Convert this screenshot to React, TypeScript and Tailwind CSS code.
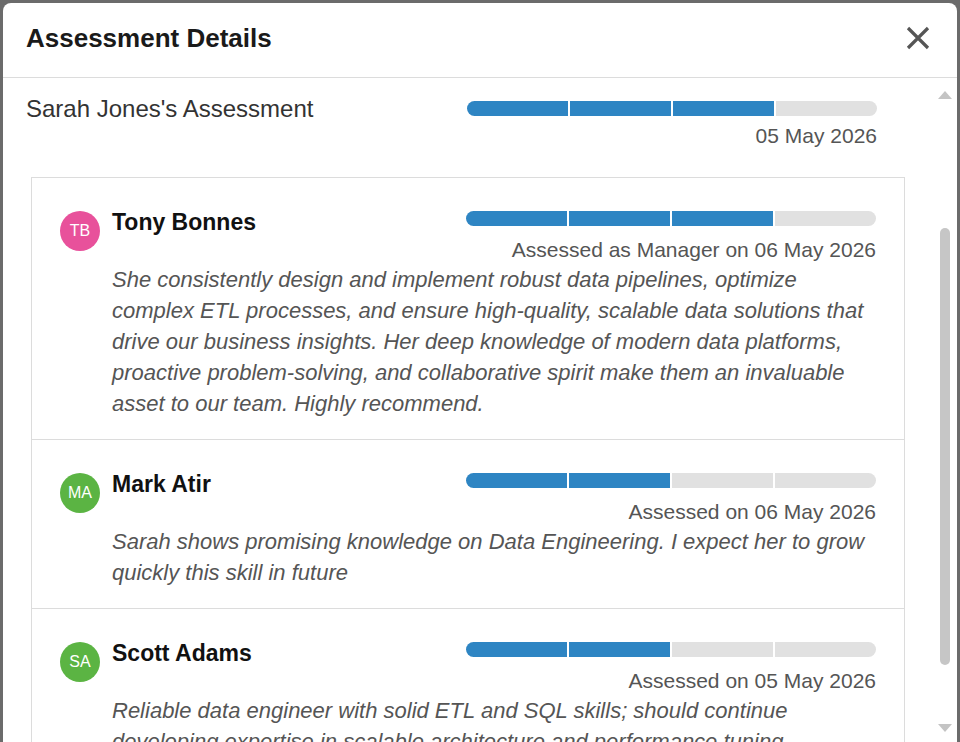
import React from "react";

type Review = {
  initials: string;
  name: string;
  avatar: string;
  filled: number;
  assessed: string;
  comment: string;
};

const reviews: Review[] = [
  {
    initials: "TB",
    name: "Tony Bonnes",
    avatar: "bg-[#e8519b]",
    filled: 3,
    assessed: "Assessed as Manager on 06 May 2026",
    comment:
      "She consistently design and implement robust data pipelines, optimize complex ETL processes, and ensure high-quality, scalable data solutions that drive our business insights. Her deep knowledge of modern data platforms, proactive problem-solving, and collaborative spirit make them an invaluable asset to our team. Highly recommend.",
  },
  {
    initials: "MA",
    name: "Mark Atir",
    avatar: "bg-[#5bb443]",
    filled: 2,
    assessed: "Assessed on 06 May 2026",
    comment:
      "Sarah shows promising knowledge on Data Engineering. I expect her to grow quickly this skill in future",
  },
  {
    initials: "SA",
    name: "Scott Adams",
    avatar: "bg-[#5bb443]",
    filled: 2,
    assessed: "Assessed on 05 May 2026",
    comment:
      "Reliable data engineer with solid ETL and SQL skills; should continue developing expertise in scalable architecture and performance tuning",
  },
];

function LevelBar({ filled, total = 4 }: { filled: number; total?: number }) {
  return (
    <div className="flex h-[15px] w-[410px] shrink-0 gap-[2px] overflow-hidden rounded-full">
      {Array.from({ length: total }).map((_, i) => (
        <div
          key={i}
          className={i < filled ? "flex-1 bg-[#2e85c3]" : "flex-1 bg-[#e1e1e1]"}
        />
      ))}
    </div>
  );
}

function ReviewRow({ review, last }: { review: Review; last: boolean }) {
  return (
    <div
      className={
        last
          ? "flex pt-[29px] pb-[20px] pl-[28px] pr-[28px]"
          : "flex border-b border-[#dcdcdc] pt-[29px] pb-[20px] pl-[28px] pr-[28px]"
      }
    >
      <div
        className={`mt-[4px] flex h-[40px] w-[40px] shrink-0 items-center justify-center rounded-full text-[16px] text-white ${review.avatar}`}
      >
        {review.initials}
      </div>
      <div className="ml-[12px] flex-1">
        <div className="flex h-[30px] items-start justify-between">
          <span className="text-[23px] font-bold leading-[30px] text-[#111]">
            {review.name}
          </span>
          <div className="mt-[4px]">
            <LevelBar filled={review.filled} />
          </div>
        </div>
        <div className="mt-[1px] text-right text-[21px] leading-[24px] text-[#555]">
          {review.assessed}
        </div>
        <p className="mt-[2px] text-[22px] italic leading-[31px] text-[#555]">
          {review.comment}
        </p>
      </div>
    </div>
  );
}

function ScrollTrack() {
  return (
    <div className="flex w-[22px] shrink-0 flex-col items-start">
      <svg width="16" height="10" viewBox="0 0 16 10" className="ml-[2px] mt-[12px]">
        <path d="M8 1 L15 9 L1 9 Z" fill="#c4c4c4" />
      </svg>
      <div className="ml-[5px] mt-[128px] h-[437px] w-[10px] rounded-full bg-[#c6c6c6]" />
      <svg width="16" height="10" viewBox="0 0 16 10" className="ml-[2px] mt-[58px]">
        <path d="M1 1 L15 1 L8 9 Z" fill="#c4c4c4" />
      </svg>
    </div>
  );
}

export default function App() {
  return (
    <div
      className="h-[742px] w-full overflow-hidden bg-[#6b6b6b] px-[3px] pt-[3px]"
      style={{ fontFamily: '"Liberation Sans", Arial, sans-serif' }}
    >
      <div className="flex h-full flex-col overflow-hidden rounded-t-[8px] bg-white">
        <header className="flex h-[75px] shrink-0 items-center justify-between border-b border-[#dcdcdc] pb-[4px] pl-[23px] pr-[27px]">
          <h1 className="text-[26px] font-bold text-[#1a1a1a]">Assessment Details</h1>
          <svg width="24" height="24" viewBox="0 0 24 24">
            <path d="M2 2 L22 22 M22 2 L2 22" stroke="#555" strokeWidth="3.2" />
          </svg>
        </header>

        <div className="flex min-h-0 flex-1">
          <div className="flex-1 overflow-hidden">
            <section className="pl-[23px] pr-[58px] pt-[23px]">
              <div className="flex items-center justify-between">
                <span className="text-[24px] leading-[15px] text-[#333]">
                  Sarah Jones's Assessment
                </span>
                <LevelBar filled={3} />
              </div>
              <div className="mt-[8px] text-right text-[21px] leading-[24px] text-[#555]">
                05 May 2026
              </div>
            </section>

            <div className="ml-[28px] mr-[30px] mt-[29px] border border-[#dcdcdc]">
              {reviews.map((r, i) => (
                <ReviewRow key={r.name} review={r} last={i === reviews.length - 1} />
              ))}
            </div>
          </div>
          <ScrollTrack />
        </div>
      </div>
    </div>
  );
}
